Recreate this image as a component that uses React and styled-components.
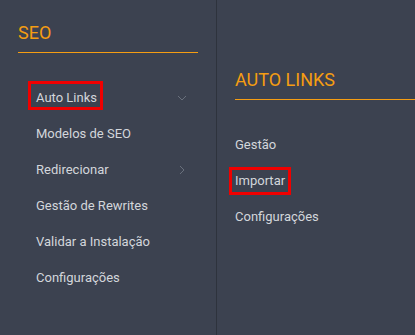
import React from 'react';
import styled, { createGlobalStyle } from 'styled-components';

const GlobalStyle = createGlobalStyle`
    html, body {
        margin: 0;
        padding: 0;
        background: #3c4250;
    }
    body {
        font-family: Roboto, 'Liberation Sans', sans-serif;
    }
`;

// 전체 화면
const Screen = styled.div`
    display: flex;
    width: 415px;
    height: 335px;
    overflow: hidden;
    background: #3c4250;
`;

// 메뉴 패널
const Panel = styled.div`
    box-sizing: border-box;
    flex: ${(p) => (p.$grow ? '1 0 auto' : '0 0 217px')};
    padding: ${(p) => p.$top}px ${(p) => (p.$grow ? 0 : 18)}px 0 18px;
    border-right: ${(p) => (p.$grow ? 'none' : '1px solid #2e333d')};
`;

// 패널 제목 + 주황 밑줄
const Title = styled.div`
    font-size: 18px;
    line-height: 24px;
    color: #f59d12;
    padding-bottom: 7px;
    border-bottom: 1px solid #f59d12;
`;

const List = styled.div`
    display: flex;
    flex-direction: column;
    margin: 27px 0 0 ${(p) => p.$indent}px;
`;

const Row = styled.div`
    display: flex;
    align-items: center;
    justify-content: space-between;
    height: 36px;
    padding-right: ${(p) => p.$right || 0}px;
`;

// 링크, 선택 시 빨간 테두리
const Link = styled.span`
    font-size: 13px;
    line-height: 16px;
    color: #d3d6db;
    border: 3px solid ${(p) => (p.$marked ? '#f00000' : 'transparent')};
    padding: ${(p) => (p.$lift ? `6px 3px 1px ${p.$pad}px` : `3px 3px 3px ${p.$pad}px`)};
    margin-bottom: ${(p) => (p.$lift ? 6 : 0)}px;
`;

const Chevron = styled.svg`
    display: block;
    fill: none;
    stroke: #69707c;
    stroke-width: 1;
`;

const ChevronDown = () => (
    <Chevron width="10" height="6" viewBox="0 0 10 6">
        <path d="M1 1l4 4 4-4" />
    </Chevron>
);

const ChevronRight = () => (
    <Chevron width="6" height="10" viewBox="0 0 6 10">
        <path d="M1 1l4 4-4 4" />
    </Chevron>
);

const seoItems = [
    { label: 'Auto Links', icon: 'down', marked: true },
    { label: 'Modelos de SEO' },
    { label: 'Redirecionar', icon: 'right' },
    { label: 'Gestão de Rewrites' },
    { label: 'Validar a Instalação' },
    { label: 'Configurações' },
];

const autoItems = [
    { label: 'Gestão' },
    { label: 'Importar', marked: true },
    { label: 'Configurações' },
];

export default function App() {
    return (
        <>
            <GlobalStyle />
            <Screen>
                <Panel $top={21}>
                    <Title>SEO</Title>
                    <List $indent={10}>
                        {seoItems.map((item) => (
                            <Row key={item.label} $right={item.icon === 'down' ? 11 : 13}>
                                <Link $marked={item.marked} $lift={item.marked} $pad={5}>
                                    {item.label}
                                </Link>
                                {item.icon === 'down' && <ChevronDown />}
                                {item.icon === 'right' && <ChevronRight />}
                            </Row>
                        ))}
                    </List>
                </Panel>
                <Panel $top={68} $grow>
                    <Title>AUTO LINKS</Title>
                    <List $indent={-6}>
                        {autoItems.map((item) => (
                            <Row key={item.label}>
                                <Link $marked={item.marked} $pad={3}>
                                    {item.label}
                                </Link>
                            </Row>
                        ))}
                    </List>
                </Panel>
            </Screen>
        </>
    );
}
